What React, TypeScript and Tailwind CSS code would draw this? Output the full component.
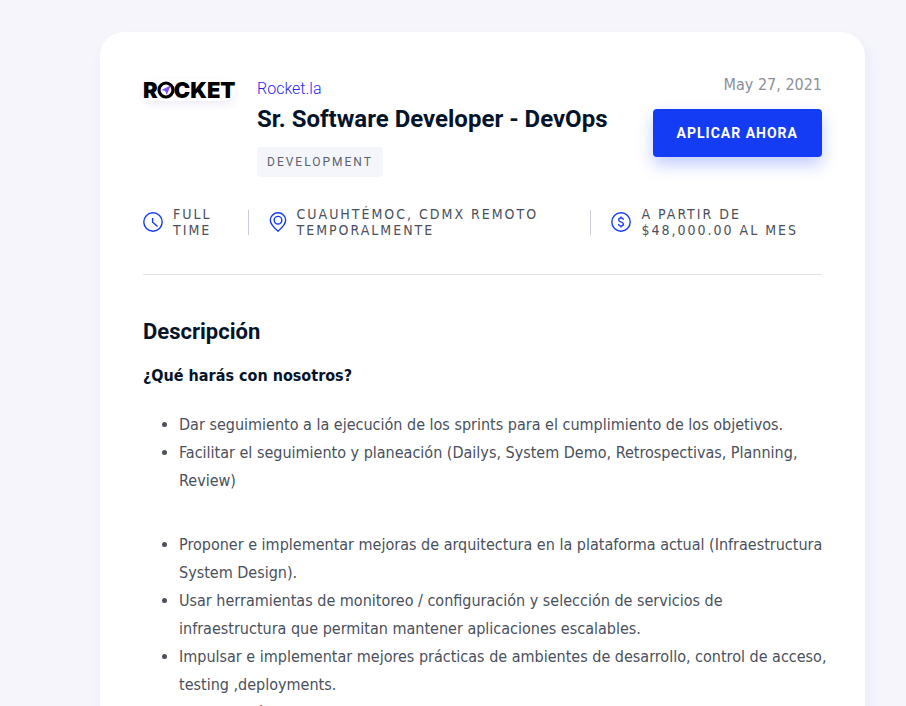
import { type FC, type ReactNode } from "react";

const tasks = [
  "Dar seguimiento a la ejecución de los sprints para el cumplimiento de los objetivos.",
  "Facilitar el seguimiento y planeación (Dailys, System Demo, Retrospectivas, Planning, Review)",
];

const goals = [
  "Proponer e implementar mejoras de arquitectura en la plataforma actual (Infraestructura System Design).",
  "Usar herramientas de monitoreo / configuración y selección de servicios de infraestructura que permitan mantener aplicaciones escalables.",
  "Impulsar e implementar mejores prácticas de ambientes de desarrollo, control de acceso, testing ,deployments.",
  "Colaboración con nuestro equipo de desarrollo frente a posibles",
];

const Logo: FC = () => {
  return (
    <a
      href="#"
      aria-label="Rocket"
      className="flex h-[22px] w-[92px] items-center justify-between rounded-xl font-['Inter',sans-serif] text-[22px] leading-none font-black text-black shadow-[0_4px_8px_rgba(40,30,140,0.08)]"
    >
      <span>R</span>
      <svg viewBox="0 0 18 18" className="-mx-px size-[18px] shrink-0" aria-hidden="true">
        <circle cx="9" cy="9" r="7" fill="#fff" stroke="#000" strokeWidth="3.2" />
        <path d="M13.8 4.4 4.4 9l3.8 1.1 1.5 3.7z" fill="#7c4dff" />
      </svg>
      <span>C</span>
      <span>K</span>
      <span>E</span>
      <span>T</span>
    </a>
  );
};

const ClockIcon: FC = () => {
  return (
    <svg viewBox="0 0 20 20" fill="none" stroke="#153cf5" strokeWidth="1.4" className="size-5 shrink-0" aria-hidden="true">
      <circle cx="10" cy="10" r="9.2" />
      <path d="M9.6 6v4.2l5 4.3" />
    </svg>
  );
};

const PinIcon: FC = () => {
  return (
    <svg viewBox="0 0 18 20" fill="none" stroke="#153cf5" strokeWidth="1.4" className="h-5 w-[18px] shrink-0" aria-hidden="true">
      <path d="M9 19.2C5.6 16.3 1.3 12.4 1.3 8.3a7.7 7.5 0 0 1 15.4 0c0 4.1-4.3 8-7.7 10.9z" />
      <circle cx="9" cy="8.2" r="3.8" />
    </svg>
  );
};

const MoneyIcon: FC = () => {
  return (
    <svg viewBox="0 0 20 20" fill="none" stroke="#153cf5" strokeWidth="1.4" className="size-5 shrink-0" aria-hidden="true">
      <circle cx="10" cy="10" r="9.2" />
      <path d="M12.3 7.8c0-1.1-1-1.8-2.3-1.8s-2.3.7-2.3 1.9c0 2.7 4.7 1.4 4.7 4.2 0 1.2-1 1.9-2.4 1.9s-2.4-.7-2.4-1.9M10 4.5V6m0 8v1.5" />
    </svg>
  );
};

const Fact: FC<{ icon: ReactNode; children: ReactNode }> = ({ icon, children }) => {
  return (
    <div className="flex items-center gap-[10px]">
      {icon}
      <p>{children}</p>
    </div>
  );
};

const Bullets: FC<{ items: string[] }> = ({ items }) => {
  return (
    <ul className="-mr-3 mb-9 list-disc pl-9">
      {items.map((item) => (
        <li key={item}>{item}</li>
      ))}
    </ul>
  );
};

const App: FC = () => {
  return (
    <main className="min-h-screen bg-[#f5f5fb] pt-8 pr-[41px] pl-[100px] font-['DejaVu_Sans_Condensed','DejaVu_Sans',sans-serif] text-[#4a505c]">
      <article className="rounded-3xl bg-white px-[43px] pt-[41px] pb-10 shadow-[3px_8px_16px_rgba(40,40,250,0.05)]">
        <header className="flex items-start justify-between">
          <div className="flex gap-[22px]">
            <div className="pt-1.5">
              <Logo />
            </div>
            <div className="font-['Roboto',sans-serif]">
              <a href="#" className="block pt-1 leading-6 font-light text-[#2a1ff0]">
                Rocket.la
              </a>
              <h1 className="pt-0.5 text-2xl leading-8 font-bold text-[#05142b]">
                Sr. Software Developer - DevOps
              </h1>
              <span className="mt-3 inline-block rounded bg-[#f5f6fb] px-[10px] text-xs leading-[30px] tracking-[2px] text-[#5b6170]">
                DEVELOPMENT
              </span>
            </div>
          </div>
          <div className="flex flex-col items-end">
            <time dateTime="2021-05-27" className="leading-6 text-[#8b909b]">
              May 27, 2021
            </time>
            <button
              type="button"
              className="mt-3 h-12 rounded bg-[#153cf5] px-6 font-['Roboto',sans-serif] text-sm font-bold tracking-[1px] text-white shadow-[0_8px_16px_rgba(21,60,245,0.25)]"
            >
              APLICAR AHORA
            </button>
          </div>
        </header>

        <section className="mt-[29px] flex items-center gap-5 border-b border-[#e2e2ea] pb-9 text-sm leading-4 tracking-[2px]">
          <Fact icon={<ClockIcon />}>
            FULL
            <br />
            TIME
          </Fact>
          <span className="ml-4 h-[25px] w-px bg-[#c9ced6]" />
          <Fact icon={<PinIcon />}>
            CUAUHTÉMOC, CDMX REMOTO
            <br />
            TEMPORALMENTE
          </Fact>
          <span className="ml-auto h-[25px] w-px bg-[#c9ced6]" />
          <div className="mr-6">
            <Fact icon={<MoneyIcon />}>
              A PARTIR DE
              <br />
              $48,000.00 AL MES
            </Fact>
          </div>
        </section>

        <section className="pt-[41px] leading-7">
          <h2 className="font-['Roboto',sans-serif] text-[22px] leading-8 font-bold text-[#05142b]">
            Descripción
          </h2>
          <h3 className="mt-[14px] mb-[21px] text-base leading-7 font-bold text-[#05142b]">
            ¿Qué harás con nosotros?
          </h3>
          <Bullets items={tasks} />
          <Bullets items={goals} />
        </section>
      </article>
    </main>
  );
};

export default App;
